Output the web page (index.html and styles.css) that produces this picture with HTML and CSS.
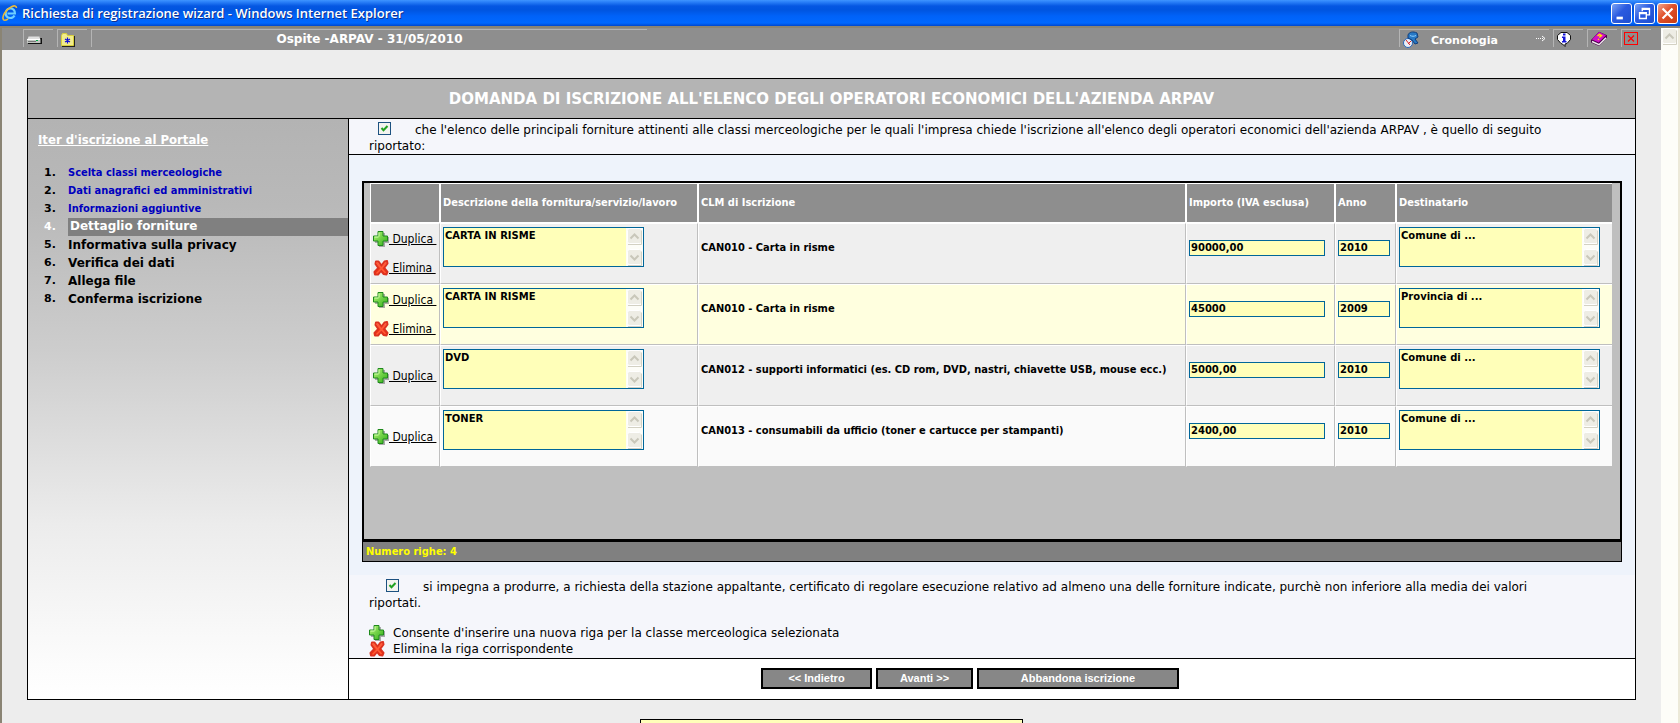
FILE: index.html
```html
<!DOCTYPE html>
<html lang="it">
<head>
<meta charset="utf-8">
<title>Richiesta di registrazione wizard</title>
<link rel="stylesheet" href="styles.css">
</head>
<body>
<svg class="defs" width="0" height="0" aria-hidden="true">
  <defs>
    <linearGradient id="gGreen" x1="0" y1="0" x2="1" y2="1"><stop offset="0" stop-color="#b6f578"/><stop offset="1" stop-color="#2fae17"/></linearGradient>
    <linearGradient id="gRed" x1="0" y1="0" x2="0" y2="1"><stop offset="0" stop-color="#ff8a6e"/><stop offset=".5" stop-color="#fb3c18"/><stop offset="1" stop-color="#f22a06"/></linearGradient>
    <symbol id="plus" viewBox="0 0 16 16">
      <path d="M6 2h6v4h4v6h-4v4H6v-4H2V6h4z" fill="#777" opacity=".6"/>
      <path d="M5 .5h5v4.500h4.500v5H10v4.500H5V10H.5V5H5z" fill="url(#gGreen)" stroke="#1f8a1c"/>
      <path d="M6 5.500v-4M1.500 6h4" stroke="#d6ffb0" fill="none"/>
    </symbol>
    <symbol id="cross" viewBox="0 0 16 16">
      <path d="M3 1.500L5.500 1.500L8.500 5.500L11.500 1.500L14 1L14.500 3.500L11.200 8L14.500 12L13.500 14.500L10.500 14L8 10.800L5 14.500L2 14.500L1.500 12L5.300 8L2.500 4z" fill="url(#gRed)" stroke="#dc3220" stroke-width="2" stroke-linejoin="round"/>
      <path d="M3.500 2.500l5 6 4.500-6M8.500 8.500l-5 5M8.500 8.500l4 4.500" fill="none" stroke="#ff5a38" stroke-width="1.500"/>
    </symbol>
    <symbol id="sbUp" viewBox="0 0 17 17"><rect x="1.500" y=".500" width="14" height="15" rx="2" fill="#eeede5" stroke="#fff"/><path d="M2 16.500h13.500v-14" fill="none" stroke="#d3d1c3"/><path d="M4.500 10.500l4-4 4 4" fill="none" stroke="#c9c7ba" stroke-width="2"/></symbol>
    <symbol id="sbDown" viewBox="0 0 17 17"><rect x="1.500" y=".500" width="14" height="15" rx="2" fill="#eeede5" stroke="#fff"/><path d="M2 16.500h13.500v-14" fill="none" stroke="#d3d1c3"/><path d="M4.500 6.500l4 4 4-4" fill="none" stroke="#c9c7ba" stroke-width="2"/></symbol>
  </defs>
</svg>

<header class="titlebar">
  <svg class="ie" viewBox="0 0 16 16" aria-hidden="true">
    <path d="M12.500 10.500c-.9 1.700-2.300 2.500-4.100 2.500-2.800 0-4.700-2-4.700-4.800S5.700 3.300 8.400 3.300s4.600 2 4.500 5.200H5.500" fill="none" stroke="#6fd0ff" stroke-width="2.200"/>
    <path d="M1.500 14.800C-.5 12 3.500 4.500 9.500 1.700c3-1.400 5-1 5 1.300M1.500 14.800c1 1 3 .2 4.500-.8" fill="none" stroke="#e9b93a" stroke-width="1.600"/>
  </svg>
  <h1 class="titlebar-text">Richiesta di registrazione wizard - Windows Internet Explorer</h1>
  <div class="winbtns">
    <button class="winbtn" type="button" aria-label="Riduci a icona"><svg viewBox="0 0 21 21"><path d="M5 14h7v3H5z" fill="#fff"/></svg></button>
    <button class="winbtn" type="button" aria-label="Ripristina"><svg viewBox="0 0 21 21"><path d="M8 8V5h8v7h-3M8 6h8" fill="none" stroke="#fff" stroke-width="1.500"/><path d="M5 9.500h7.500V16H5zM5 10.500h7" fill="none" stroke="#fff" stroke-width="1.500"/></svg></button>
    <button class="winbtn winbtn-close" type="button" aria-label="Chiudi"><svg viewBox="0 0 21 21"><path d="M5 5l11 11M16 5L5 16" stroke="#fff" stroke-width="2.400"/></svg></button>
  </div>
</header>

<div class="window">
  <div class="page">
    <nav class="toolbar">
      <button class="tool tool-sm" type="button" aria-label="Stampa"><svg width="16" height="16" viewBox="0 0 16 16"><path d="M3 6h11v1h2v6H2V8z" fill="#111"/><path d="M2.500 5.500h11l1 3h-13z" fill="#dedede"/><path d="M1 8.500h13.500V12H1z" fill="#c2c6c2"/><path d="M1 8.500h13" stroke="#fff"/><path d="M2 10.500h8" stroke="#777"/><path d="M10 9.500h2" stroke="#0a4"/></svg></button>
      <button class="tool tool-sm" type="button" aria-label="Preferiti"><svg width="16" height="16" viewBox="0 0 16 16"><path d="M2 5h13v11H2z" fill="#222"/><path d="M1.500 14.500v-10l1-2h4l1 2h6v10z" fill="#f2ec8c" stroke="#d8cf3a"/><path d="M7.500 6.500v6M5 8l5 3M10 8l-5 3" stroke="#1010d8" stroke-width="1.200"/></svg></button>
      <span class="tool tool-status">Ospite -ARPAV - 31/05/2010</span>
      <button class="tool tool-history" type="button">
        <svg width="18" height="18" viewBox="0 0 18 18"><circle cx="6" cy="13" r="4.500" fill="#e9eef6" stroke="#2a66b8"/><path d="M4 10l4 5M9 11l-3 3" stroke="#d22" fill="none"/><path d="M6 5c1-3 5-4 9-2l1 4-3 2 3 4-3 1-3-4-4-2z" fill="#2779c6" stroke="#123f7c"/><path d="M8 5.500c2 1 4 1 6 0" stroke="#8fd0ff" fill="none"/></svg>
        <span class="tool-label">Cronologia</span>
        <svg width="10" height="8" viewBox="0 0 10 8"><path d="M0 3.500h7" stroke="#fff" stroke-dasharray="1 1"/><path d="M6 1l3 2.500L6 6" fill="none" stroke="#fff"/></svg>
      </button>
      <button class="tool tool-act" type="button" aria-label="Informazioni"><svg width="16" height="16" viewBox="0 0 16 16"><path d="M5 1.500h6l3.500 3v4L11 12.500 9 13v2.500L6.500 13 5 12.500 1.500 8.500v-4z" fill="#fff" stroke="#111"/><path d="M7 2.500h2.500v2H7zM6 5.500h3.500V10h1v1.500H6V10h1V7H6z" fill="#1414d8"/></svg></button>
      <button class="tool tool-act" type="button" aria-label="Guida"><svg width="18" height="16" viewBox="0 0 18 16"><path d="M1 9L9 .800l8 3.500v2.500L9 15 1 11.500z" fill="#4d004d"/><path d="M2 8.500L9 1l7 3.300-7.300 7.300z" fill="#d010c8"/><path d="M2 10.500l7 3.200 7-7" fill="none" stroke="#eee" stroke-width="1.400"/><path d="M7.500 5l2-1.500 2 1.200-2.200 1.700M8 8.200l1 .5" stroke="#ffe600" fill="none" stroke-width="1.500"/></svg></button>
      <button class="tool tool-act" type="button" aria-label="Esci"><svg width="14" height="13" viewBox="0 0 14 13"><rect x=".500" y=".500" width="13" height="12" fill="none" stroke="#f00"/><path d="M4 3.500l6 6M10 3.500l-6 6" stroke="#f00" stroke-width="1.200"/></svg></button>
    </nav>

    <main class="wizard">
      <h2 class="wizard-title">DOMANDA DI ISCRIZIONE ALL'ELENCO DEGLI OPERATORI ECONOMICI DELL'AZIENDA ARPAV</h2>
      <aside class="steps">
        <h3 class="steps-title">Iter d'iscrizione al Portale</h3>
        <ol class="steps-list">
          <li class="step"><span class="num">1.</span><a class="step-name" href="#s1">Scelta classi merceologiche</a></li>
          <li class="step"><span class="num">2.</span><a class="step-name" href="#s2">Dati anagrafici ed amministrativi</a></li>
          <li class="step"><span class="num">3.</span><a class="step-name" href="#s3">Informazioni aggiuntive</a></li>
          <li class="step step-current"><span class="num">4.</span><span class="step-name">Dettaglio forniture</span></li>
          <li class="step"><span class="num">5.</span><span class="step-name">Informativa sulla privacy</span></li>
          <li class="step"><span class="num">6.</span><span class="step-name">Verifica dei dati</span></li>
          <li class="step"><span class="num">7.</span><span class="step-name">Allega file</span></li>
          <li class="step"><span class="num">8.</span><span class="step-name">Conferma iscrizione</span></li>
        </ol>
      </aside>

      <section class="content">
        <div class="clause clause-first">
          <input class="check" type="checkbox" id="c1" checked><label for="c1">che l'elenco delle principali forniture attinenti alle classi merceologiche per le quali l'impresa chiede l'iscrizione all'elenco degli operatori economici dell'azienda ARPAV , è quello di seguito riportato:</label>
        </div>

        <div class="supplies">
          <div class="grid-box">
            <table class="grid">
              <colgroup><col class="c-act"><col class="c-desc"><col><col class="c-imp"><col class="c-anno"><col class="c-dest"></colgroup>
              <thead>
                <tr><th></th><th>Descrizione della fornitura/servizio/lavoro</th><th>CLM di Iscrizione</th><th>Importo (IVA esclusa)</th><th>Anno</th><th>Destinatario</th></tr>
              </thead>
              <tbody>
                <tr class="row-a">
                  <td><div class="acts"><a class="act" href="#dup"><svg class="ico"><use href="#plus"/></svg><span>&nbsp;Duplica&nbsp;</span></a><a class="act" href="#del"><svg class="ico"><use href="#cross"/></svg><span>&nbsp;Elimina&nbsp;</span></a></div></td>
                  <td class="top"><div class="area"><textarea aria-label="Descrizione">CARTA IN RISME</textarea><span class="sb"><svg><use href="#sbUp"/></svg><svg><use href="#sbDown"/></svg></span></div></td>
                  <td>CAN010 - Carta in risme</td>
                  <td><input class="txt txt-imp" aria-label="Importo" value="90000,00"></td>
                  <td><input class="txt txt-anno" aria-label="Anno" value="2010"></td>
                  <td class="top"><div class="area"><textarea aria-label="Destinatario">Comune di ...</textarea><span class="sb"><svg><use href="#sbUp"/></svg><svg><use href="#sbDown"/></svg></span></div></td>
                </tr>
                <tr class="row-b">
                  <td><div class="acts"><a class="act" href="#dup"><svg class="ico"><use href="#plus"/></svg><span>&nbsp;Duplica&nbsp;</span></a><a class="act" href="#del"><svg class="ico"><use href="#cross"/></svg><span>&nbsp;Elimina&nbsp;</span></a></div></td>
                  <td class="top"><div class="area"><textarea aria-label="Descrizione">CARTA IN RISME</textarea><span class="sb"><svg><use href="#sbUp"/></svg><svg><use href="#sbDown"/></svg></span></div></td>
                  <td>CAN010 - Carta in risme</td>
                  <td><input class="txt txt-imp" aria-label="Importo" value="45000"></td>
                  <td><input class="txt txt-anno" aria-label="Anno" value="2009"></td>
                  <td class="top"><div class="area"><textarea aria-label="Destinatario">Provincia di ...</textarea><span class="sb"><svg><use href="#sbUp"/></svg><svg><use href="#sbDown"/></svg></span></div></td>
                </tr>
                <tr class="row-a">
                  <td><div class="acts"><a class="act" href="#dup"><svg class="ico"><use href="#plus"/></svg><span>&nbsp;Duplica&nbsp;</span></a></div></td>
                  <td class="top"><div class="area"><textarea aria-label="Descrizione">DVD</textarea><span class="sb"><svg><use href="#sbUp"/></svg><svg><use href="#sbDown"/></svg></span></div></td>
                  <td>CAN012 - supporti informatici (es. CD rom, DVD, nastri, chiavette USB, mouse ecc.)</td>
                  <td><input class="txt txt-imp" aria-label="Importo" value="5000,00"></td>
                  <td><input class="txt txt-anno" aria-label="Anno" value="2010"></td>
                  <td class="top"><div class="area"><textarea aria-label="Destinatario">Comune di ...</textarea><span class="sb"><svg><use href="#sbUp"/></svg><svg><use href="#sbDown"/></svg></span></div></td>
                </tr>
                <tr class="row-c">
                  <td><div class="acts"><a class="act" href="#dup"><svg class="ico"><use href="#plus"/></svg><span>&nbsp;Duplica&nbsp;</span></a></div></td>
                  <td class="top"><div class="area"><textarea aria-label="Descrizione">TONER</textarea><span class="sb"><svg><use href="#sbUp"/></svg><svg><use href="#sbDown"/></svg></span></div></td>
                  <td>CAN013 - consumabili da ufficio (toner e cartucce per stampanti)</td>
                  <td><input class="txt txt-imp" aria-label="Importo" value="2400,00"></td>
                  <td><input class="txt txt-anno" aria-label="Anno" value="2010"></td>
                  <td class="top"><div class="area"><textarea aria-label="Destinatario">Comune di ...</textarea><span class="sb"><svg><use href="#sbUp"/></svg><svg><use href="#sbDown"/></svg></span></div></td>
                </tr>
              </tbody>
            </table>
          </div>
          <div class="grid-count">Numero righe: 4</div>
        </div>

        <div class="notes">
          <div class="clause clause-second">
            <input class="check check-second" type="checkbox" id="c2" checked><label for="c2">si impegna a produrre, a richiesta della stazione appaltante, certificato di regolare esecuzione relativo ad almeno una delle forniture indicate, purchè non inferiore alla media dei valori riportati.</label>
          </div>
          <ul class="legend">
            <li class="legend-row"><svg class="ico"><use href="#plus"/></svg>Consente d'inserire una nuova riga per la classe merceologica selezionata</li>
            <li class="legend-row"><svg class="ico"><use href="#cross"/></svg>Elimina la riga corrispondente</li>
          </ul>
        </div>

        <div class="buttons">
          <button class="btn btn-back" type="button">&lt;&lt; Indietro</button>
          <button class="btn btn-next" type="button">Avanti &gt;&gt;</button>
          <button class="btn btn-quit" type="button">Abbandona iscrizione</button>
        </div>
      </section>
    </main>
    <div class="message"></div>
  </div>
  <div class="scrollbar"><svg class="scroll-up"><use href="#sbUp"/></svg></div>
</div>
</body>
</html>
```
FILE: styles.css
```css
* { box-sizing: border-box; }

body {
  margin: 0;
  height: 100vh;
  overflow: hidden;
  display: flex;
  flex-direction: column;
  background: #ededed;
  font-family: "DejaVu Sans", Verdana, sans-serif;
  font-size: 12px;
  color: #000;
}

h1, h2, h3, ol, ul { margin: 0; padding: 0; list-style: none; }
button, input, textarea { margin: 0; padding: 0; border: 0; font: inherit; color: inherit; border-radius: 0; }
.defs { position: absolute; }

/* window frame */
.titlebar {
  flex: none;
  height: 26px;
  display: flex;
  align-items: center;
  padding: 0 2px;
  background: linear-gradient(#3f95ff 0, #2a80f8 2px, #0557e2 6px, #0055e0 10px, #0062f8 16px, #0068ff 23px, #0047cc 26px);
}
.ie { width: 16px; height: 18px; margin-right: 4px; }
.titlebar-text {
  flex: 1;
  font: 600 13px/24px "Open Sans", "Trebuchet MS", sans-serif;
  color: #fff;
  text-shadow: 1px 1px #10308c;
}
.winbtns { display: flex; gap: 2px; }
.winbtn {
  width: 21px;
  height: 21px;
  border: 1px solid #fff;
  border-radius: 3px;
  background: linear-gradient(135deg, #7ca4f4, #2a5ae0 45%, #1f4fd0);
}
.winbtn svg { display: block; width: 19px; height: 19px; }
.winbtn-close { background: linear-gradient(135deg, #f0a58c, #e0502a 45%, #c63c12); }

.window {
  flex: 1;
  min-height: 0;
  display: flex;
  border-top: 2px solid #8a8474;
  border-left: 2px solid #8a8474;
}
.page { flex: 1; min-width: 0; overflow: hidden; }
.scrollbar {
  flex: none;
  width: 19px;
  background: #fdfdf8;
  border-right: 2px solid #ece9d8;
}
.scroll-up { display: block; width: 17px; height: 17px; }

/* toolbar */
.toolbar {
  height: 22px;
  display: flex;
  gap: 4px;
  padding: 1px 10px 0 21px;
  background: #8e8e8e;
  color: #fff;
  font-weight: bold;
  font-size: 11px;
}
.tool {
  display: flex;
  align-items: center;
  height: 18px;
  border-top: 1px solid #b4b4b4;
  border-left: 1px solid #b4b4b4;
  background: none;
}
.tool-sm { width: 30px; padding-left: 2px; }
.tool-status { width: 556px; justify-content: center; margin-right: auto; font-size: 12px; line-height: 20px; }
.tool-history { width: 150px; padding: 0 3px 0 2px; }
.tool-label { margin-left: 11px; padding-top: 4px; flex: 1; text-align: left; line-height: 18px; }
.tool-act { width: 30px; padding-left: 2px; }

/* wizard frame */
.wizard {
  display: grid;
  grid-template-columns: 321px 1fr;
  margin: 28px 25px 0;
  border: 1px solid #000;
}
.wizard-title {
  grid-column: 1 / -1;
  height: 40px;
  border-bottom: 1px solid #000;
  background: #b4b4b4;
  color: #fff;
  font-size: 15px;
  line-height: 41px;
  text-align: center;
}

/* steps */
.steps {
  border-right: 1px solid #000;
  padding-top: 12px;
  background: linear-gradient(#b3b3b3 0, #b9b9b9 15%, #cdcdcd 40%, #ececec 70%, #fcfcfc 94%, #fff);
  font-weight: bold;
  font-size: 11px;
}
.steps-title {
  margin: 0 0 15px 10px;
  font: bold 13px/18px "DejaVu Sans Condensed", Tahoma, sans-serif;
  color: #fff;
  text-decoration: underline;
}
.step { display: flex; line-height: 18px; }
.num { width: 40px; padding-left: 16px; }
.step-name { flex: 1; font-size: 12px; }
a.step-name { color: #0000bf; text-decoration: none; font-size: 11px; font-family: "DejaVu Sans Condensed", Tahoma, sans-serif; }
.step-current { color: #fff; }
.step-current .step-name { background: #808080; padding-left: 2px; line-height: 16px; }

/* content */
.content { display: flex; flex-direction: column; min-width: 0; background: #eef3fb; }
.clause { padding: 0 66px 0 20px; line-height: 16px; }
.clause-first { padding-top: 3px; background: #f5f6fb; border-bottom: 1px solid #000; }
.clause-second { padding-top: 4px; }
.check {
  appearance: none;
  width: 13px;
  height: 13px;
  margin: 0 24px 0 9px;
  border: 1px solid #1c5180;
  vertical-align: -1px;
  background: #f3f3ef url("data:image/svg+xml,%3Csvg xmlns='http://www.w3.org/2000/svg' viewBox='0 0 11 11'%3E%3Cpath d='M2.500 5l2 2.200L8.500 3' fill='none' stroke='%2321a121' stroke-width='2'/%3E%3C/svg%3E");
}
.check-second { margin-left: 17px; }

.supplies { padding: 26px 13px 13px; }
.grid-box {
  min-height: 361px;
  border: 2px solid #000;
  border-bottom-width: 3px;
  padding: 0 8px 0 6px;
  background: #bfbfbf;
}
.grid {
  width: 100%;
  table-layout: fixed;
  border-collapse: separate;
  border-spacing: 0;
  font: bold 11px/14px "DejaVu Sans Condensed", Tahoma, sans-serif;
}
.c-act { width: 70px; }
.c-desc { width: 258px; }
.c-imp { width: 149px; }
.c-anno { width: 61px; }
.c-dest { width: 216px; }
.grid th {
  height: 40px;
  padding: 0 2px;
  border: 1px solid #fff;
  background: #8e8e8e;
  color: #fff;
  text-align: left;
}
.grid td {
  height: 61px;
  padding: 0 2px 12px;
  border: 1px solid #bfbfbf;
  border-top-color: #fff;
  border-left-color: #fff;
  vertical-align: middle;
}
.grid td.top { vertical-align: top; padding-top: 3px; }
.grid td:last-child, .grid th:last-child { border-right: 0; }
.grid td:first-child { padding-bottom: 0; }
.row-a { background: #efefef; }
.row-b { background: #ffffdf; }
.row-c { background: #fafafa; }

.acts { display: flex; flex-direction: column; gap: 13px; font-weight: normal; }
.act { display: flex; align-items: center; color: #000; text-decoration: underline; white-space: nowrap; font-size: 12px; line-height: 16px; }
.ico { width: 16px; height: 16px; flex: none; display: block; }

.area { display: flex; width: 201px; height: 40px; border: 1px solid #069; background: #ffffb9; font: bold 10px/14px "DejaVu Sans", Verdana, sans-serif; }
.area textarea { flex: 1; min-width: 0; resize: none; padding: 1px; background: none; overflow: hidden; }
.sb { display: flex; flex-direction: column; justify-content: space-between; width: 17px; background: #fdfdf8; }
.sb svg { display: block; width: 17px; height: 17px; }
.txt { display: block; height: 16px; border: 1px solid #069; background: #ffffb9; padding: 0 1px; font: bold 10px/14px "DejaVu Sans", Verdana, sans-serif; }
.txt-imp { width: 136px; }
.txt-anno { width: 52px; }

.grid-count {
  height: 20px;
  padding-left: 3px;
  border: 1px solid #000;
  border-top: 0;
  background: #808080;
  color: #ff0;
  font: bold 11px/20px "DejaVu Sans Condensed", Tahoma, sans-serif;
}

.notes { background: #f5f6fb; border-bottom: 1px solid #000; }
.legend { padding: 14px 20px 1px; }
.legend-row { display: flex; gap: 8px; line-height: 16px; }

.buttons { display: flex; justify-content: center; gap: 4px; padding: 9px 44px 10px 0; background: #fff; }
.btn {
  height: 21px;
  border: 2px solid #000;
  background: #878787;
  color: #fff;
  font: bold 11px/17px "Liberation Sans", Arial, sans-serif;
}
.btn-back { width: 111px; }
.btn-next { width: 97px; }
.btn-quit { width: 202px; }

.message { width: 383px; height: 40px; margin: 19px auto 0; border: 1px solid #000; background: #ffffb9; }
```
